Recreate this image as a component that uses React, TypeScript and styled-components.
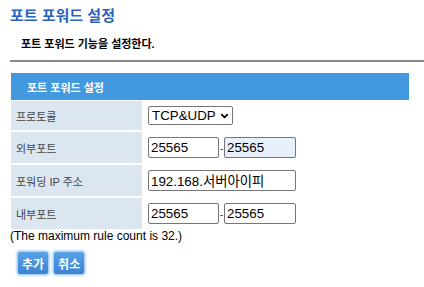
import React from "react";
import styled, { createGlobalStyle } from "styled-components";
import { ChevronDown } from "lucide-react";

const Global = createGlobalStyle`
  html, body { margin: 0; padding: 0; background: #fff; }
  body { font-family: "Liberation Sans", "Noto Sans CJK KR", sans-serif; }
`;

const Page = styled.div`
  width: 424px;
  height: 287px;
  overflow: hidden;
  padding-left: 10px;
  box-sizing: border-box;
`;

const Title = styled.h1`
  margin: 0;
  padding-top: 8px;
  height: 24px;
  box-sizing: border-box;
  font-size: 15px;
  line-height: 16px;
  font-weight: bold;
  color: #2a62c0;
`;

const Subtitle = styled.div`
  margin-top: 13px;
  padding-left: 11px;
  font-size: 11px;
  line-height: 14px;
  font-weight: bold;
  color: #000;
`;

const Divider = styled.div`
  margin-top: 9px;
  height: 2px;
  background: #888;
`;

const Panel = styled.div`
  margin-top: 11px;
  margin-left: 1px;
  width: 398px;
  display: flex;
  flex-direction: column;
  gap: 2px;
`;

const PanelHeader = styled.div`
  height: 27px;
  background: #4299e0;
  color: #fff;
  font-weight: bold;
  font-size: 11px;
  display: flex;
  align-items: center;
  padding-left: 16px;
  margin-bottom: -1px;
`;

const Row = styled.div<{ $h: number }>`
  display: grid;
  grid-template-columns: 131px 1fr;
  height: ${(p) => p.$h}px;
`;

const Label = styled.div`
  background: #dce6f1;
  color: #444;
  font-size: 11px;
  display: flex;
  align-items: center;
  padding-left: 5px;
`;

const Value = styled.div`
  display: flex;
  align-items: center;
  padding-left: 6px;
`;

const SelectWrap = styled.div`
  position: relative;
  display: inline-flex;
`;

const Select = styled.select`
  appearance: none;
  -webkit-appearance: none;
  font-family: "Liberation Sans", "Noto Sans CJK KR", sans-serif;
  font-size: 13.33px;
  height: 19px;
  width: 85px;
  padding: 0 14px 0 3px;
  border: 1px solid #767676;
  border-radius: 2px;
  background: #fff;
  color: #000;
`;

const Chevron = styled(ChevronDown)`
  position: absolute;
  right: 3px;
  top: 50%;
  transform: translateY(-50%);
  pointer-events: none;
  color: #000;
`;

const Input = styled.input<{ $w: number; $auto?: boolean }>`
  font-family: "Liberation Sans", "Noto Sans CJK KR", sans-serif;
  font-size: 13.33px;
  width: ${(p) => p.$w}px;
  height: 21px;
  box-sizing: border-box;
  padding: 1px 2px;
  border: 1px solid #767676;
  border-radius: 2px;
  background: ${(p) => (p.$auto ? "#e8f0fe" : "#fff")};
  color: #000;
`;

const Dash = styled.span`
  font-size: 11px;
  color: #444;
  width: 5px;
  text-align: center;
`;

const Note = styled.div`
  margin-top: 0px;
  font-size: 12px;
  line-height: 14px;
  color: #000;
`;

const Buttons = styled.div`
  display: flex;
  gap: 4px;
  margin-top: 8px;
  padding-left: 7px;
`;

const Button = styled.button`
  font-family: "Liberation Sans", "Noto Sans CJK KR", sans-serif;
  font-size: 12px;
  font-weight: bold;
  color: #fff;
  height: 24px;
  padding: 0 4px;
  border: 1px solid #a9d0f5;
  border-radius: 3px;
  background: linear-gradient(#5aa2e6, #3a83d2);
  box-shadow: 0 0 2px 1px #bcdcf8;
  cursor: pointer;
`;

export default function App() {
  return (
    <Page>
      <Global />
      <Title>포트 포워드 설정</Title>
      <Subtitle>포트 포워드 기능을 설정한다.</Subtitle>
      <Divider />
      <Panel>
        <PanelHeader>포트 포워드 설정</PanelHeader>
        <Row $h={29}>
          <Label>프로토콜</Label>
          <Value>
            <SelectWrap>
              <Select defaultValue="TCP&UDP">
                <option>TCP&UDP</option>
                <option>TCP</option>
                <option>UDP</option>
              </Select>
              <Chevron size={11} strokeWidth={4} />
            </SelectWrap>
          </Value>
        </Row>
        <Row $h={31}>
          <Label>외부포트</Label>
          <Value>
            <Input $w={71} defaultValue="25565" />
            <Dash>-</Dash>
            <Input $w={72} $auto defaultValue="25565" />
          </Value>
        </Row>
        <Row $h={31}>
          <Label>포워딩 IP 주소</Label>
          <Value>
            <Input $w={148} defaultValue="192.168.서버아이피" />
          </Value>
        </Row>
        <Row $h={31}>
          <Label>내부포트</Label>
          <Value>
            <Input $w={71} defaultValue="25565" />
            <Dash>-</Dash>
            <Input $w={72} defaultValue="25565" />
          </Value>
        </Row>
      </Panel>
      <Note>(The maximum rule count is 32.)</Note>
      <Buttons>
        <Button>추가</Button>
        <Button>취소</Button>
      </Buttons>
    </Page>
  );
}
